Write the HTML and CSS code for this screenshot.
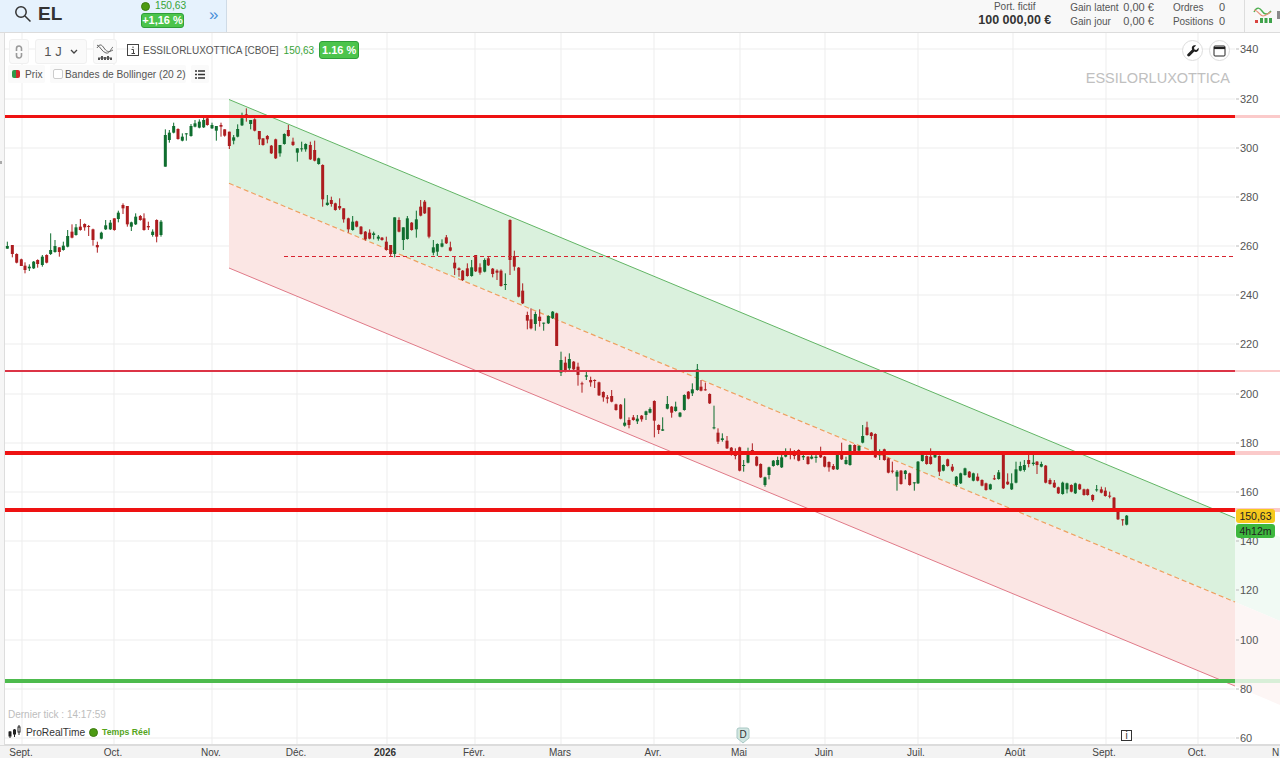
FILE: index.html
```html
<!DOCTYPE html>
<html lang="fr">
<head>
  <meta charset="UTF-8" />
  <title>EL - ProRealTime</title>
  <link rel="stylesheet" href="styles.css">
</head>
<body>

  <header class="topbar">
    <div class="search-panel">
      <svg class="search-icon" width="18" height="18" viewBox="0 0 18 18"><circle cx="7" cy="7" r="5.2"/><path d="M11 11l5.5 5.5"/></svg>
      <span class="ticker">EL</span>
      <div class="quote">
        <div class="quote-price"><span class="dot"></span>150,63</div>
        <div class="pill quote-change">+1,16 %</div>
      </div>
      <span class="more">»</span>
    </div>

    <div class="account">
      <div class="portfolio">
        <div>Port. fictif</div>
        <strong>100 000,00 €</strong>
      </div>
      <div class="stats gains">
        <span>Gain latent</span><span>0,00 €</span>
        <span>Gain jour</span><span>0,00 €</span>
      </div>
      <div class="stats orders">
        <span>Ordres</span><span>0</span>
        <span>Positions</span><span>0</span>
      </div>
      <div class="account-icon">
        <svg width="20" height="20" viewBox="0 0 20 20" fill="none"><path d="M1 7c3-6 6-4 8-1s5 5 9 0" stroke="#4caf50" stroke-width="1.4"/><path d="M1 5c4 0 6 6 9 6s5-3 8-4" stroke="#e8907a" stroke-width="1.2"/><path d="M2 15h3v3H2zM7 13h3v5H7zM11.500 13h3v5h-3zM16 13h3v5h-3z" fill="#3fa24a"/><path d="M2 15h3v3H2z" fill="#d9433f"/></svg>
      </div>
      <div class="account-edge"></div>
    </div>
  </header>

  <main class="chart">
    <svg class="plot" width="1280" height="725" viewBox="0 33 1280 725">
      <g class="grid">
        <path d="M5 49H1235M5 99H1235M5 148H1235M5 197H1235M5 246H1235M5 295H1235M5 344H1235M5 394H1235M5 443H1235M5 492H1235M5 541H1235M5 590H1235M5 640H1235M5 689H1235M5 738H1235"/>
        <path d="M22 33V745M114 33V745M212 33V745M297 33V745M387 33V745M475 33V745M561 33V745M654 33V745M740 33V745M825 33V745M918 33V745M1013 33V745M1106 33V745M1198 33V745"/>
      </g>

      <!-- channel -->
      <polygon class="band-up" points="229,99.500 1235,518 1235,602 229,183.300"/>
      <polygon class="band-down" points="229,183.300 1235,602 1235,686 229,268"/>
      <polygon class="band-up-pale" points="1235,518 1280,537 1280,621 1235,602"/>
      <polygon class="band-down-pale" points="1235,602 1280,621 1280,705 1235,686"/>
      <line class="chan-top" x1="229" y1="99.500" x2="1235" y2="518"/>
      <line class="chan-mid" x1="229" y1="183.300" x2="1235" y2="602"/>
      <line class="chan-low" x1="229" y1="268" x2="1235" y2="686"/>

      <g id="candles"></g>

      <!-- support and resistance -->
      <g class="levels">
        <rect class="lv-red" x="4" y="115" width="1231" height="3"/>
        <rect class="lv-crimson" x="4" y="370" width="1231" height="2"/>
        <rect class="lv-red" x="4" y="451" width="1231" height="4"/>
        <rect class="lv-red" x="4" y="508" width="1231" height="4"/>
        <rect class="lv-green" x="4" y="679" width="1231" height="4"/>
        <rect class="lv-red-pale" x="1235" y="115" width="45" height="3"/>
        <rect class="lv-red-pale" x="1235" y="370" width="45" height="2"/>
        <rect class="lv-red-pale" x="1235" y="451" width="45" height="4"/>
        <rect class="lv-red-pale" x="1235" y="508" width="45" height="4"/>
        <rect class="lv-green-pale" x="1235" y="679" width="45" height="4"/>
        <line class="lv-dash" x1="284" y1="256.500" x2="1235" y2="256.500"/>
      </g>

      <path class="price-ticks" d="M1236 49h3M1236 99h3M1236 148h3M1236 197h3M1236 246h3M1236 295h3M1236 344h3M1236 394h3M1236 443h3M1236 492h3M1236 541h3M1236 590h3M1236 640h3M1236 689h3M1236 738h3"/>
      <g class="price-labels">
        <text x="1240" y="53">340</text>
        <text x="1240" y="103">320</text>
        <text x="1240" y="152">300</text>
        <text x="1240" y="201">280</text>
        <text x="1240" y="250">260</text>
        <text x="1240" y="299">240</text>
        <text x="1240" y="348">220</text>
        <text x="1240" y="398">200</text>
        <text x="1240" y="447">180</text>
        <text x="1240" y="496">160</text>
        <text x="1240" y="545">140</text>
        <text x="1240" y="594">120</text>
        <text x="1240" y="644">100</text>
        <text x="1240" y="693">80</text>
        <text x="1240" y="742">60</text>
      </g>

      <rect class="time-axis" x="0" y="745" width="1280" height="13"/>
      <line class="time-rule" x1="0" y1="745" x2="1280" y2="745"/>
      <g class="time-labels">
        <text x="21" y="756">Sept.</text>
        <text x="113" y="756">Oct.</text>
        <text x="211" y="756">Nov.</text>
        <text x="296" y="756">Déc.</text>
        <text class="year" x="385" y="756">2026</text>
        <text x="474" y="756">Févr.</text>
        <text x="560" y="756">Mars</text>
        <text x="653" y="756">Avr.</text>
        <text x="739" y="756">Mai</text>
        <text x="824" y="756">Juin</text>
        <text x="916" y="756">Juil.</text>
        <text x="1015" y="756">Août</text>
        <text x="1104" y="756">Sept.</text>
        <text x="1197" y="756">Oct.</text>
        <text x="1275.500" y="756">N</text>
      </g>

      <!-- events -->
      <path class="event-d" d="M739 728h8a2 2 0 0 1 2 2v8l-6 5-6-5v-8a2 2 0 0 1 2-2z"/>
      <text class="event-d-text" x="743" y="738">D</text>
      <rect class="event-i" x="1121.500" y="730.500" width="10" height="10"/>
      <text class="event-i-text" x="1126.500" y="739">i</text>
    </svg>

    <div class="left-strip"></div>

    <div class="toolbar">
      <div class="tool-row">
        <button class="tool tool-lock">
          <svg width="8" height="14" viewBox="0 0 8 14" fill="none" stroke="#9a9a9a" stroke-width="1.600"><path d="M1.500 6V3.500a2.500 2.500 0 0 1 5 0V6"/><path d="M1.500 8v2.500a2.500 2.500 0 0 0 5 0V8"/></svg>
        </button>
        <button class="tool tool-period">1 J
          <svg width="8" height="5" viewBox="0 0 8 5" fill="none" stroke="#444" stroke-width="1.300"><path d="M1 1l3 3 3-3"/></svg>
        </button>
        <button class="tool tool-indic">
          <svg width="18" height="18" viewBox="0 0 18 18" fill="none" stroke="#555" stroke-width=".9"><path d="M1 5c3-5 5-3 7 0s4 5 9 2"/><path d="M1 2c3 1 5 7 9 8s5-5 7-6"/><path d="M2 15h14" stroke-width="1"/><path d="M3 17v-2M6 17v-4M9 17v-3M12 17v-4M15 17v-2" stroke-width="2"/></svg>
        </button>
        <svg class="info-icon" width="12" height="12" viewBox="0 0 12 12" fill="none" stroke="#444"><rect x=".5" y=".5" width="11" height="11"/><path d="M4.500 5.500H6.500V9.500M4.500 9.500H8M6 2.500v1.500" stroke-width="1"/></svg>
        <span class="chart-name">ESSILORLUXOTTICA [CBOE]</span>
        <span class="chart-price">150,63</span>
        <span class="pill chart-change">1.16 %</span>
      </div>
      <div class="tool-row second">
        <div class="chip chip-price"><span class="swatch"></span>Prix</div>
        <div class="chip chip-boll"><span class="check"></span>Bandes de Bollinger (20 2)</div>
        <div class="chip chip-list">
          <svg width="10" height="9" viewBox="0 0 10 9" stroke="#333" stroke-width="1.300"><path d="M0 1h2M3 1h7M0 4.500h2M3 4.500h7M0 8h2M3 8h7"/></svg>
        </div>
      </div>
    </div>

    <div class="round-tools">
      <button class="round">
        <svg width="12" height="12" viewBox="0 0 12 12" fill="#222"><path d="M11.500 2.800L9.400 4.900 7.400 4.500 7 2.500 9.100.4C7.400-.2 5.500.4 5 2c-.3.900-.2 1.800.1 2.500L.6 9c-.6.600-.6 1.500 0 2.100s1.600.6 2.200 0l4.500-4.500c.8.400 1.700.4 2.500.1 1.600-.6 2.300-2.300 1.700-3.900z"/></svg>
      </button>
      <button class="round">
        <svg width="13" height="12" viewBox="0 0 13 12" fill="none" stroke="#222"><rect x="1" y="1" width="11" height="10" rx="1"/><path d="M1 3h11" stroke-width="2.200"/></svg>
      </button>
    </div>

    <div class="watermark">ESSILORLUXOTTICA</div>

    <div class="tags">
      <div class="tag tag-price">150,63</div>
      <div class="tag tag-time">4h12m</div>
    </div>

    <div class="chart-foot">
      <div class="last-tick">Dernier tick : 14:17:59</div>
      <div class="brand">
        <svg width="14" height="14" viewBox="0 0 14 14" stroke="#222" fill="#222"><path d="M2 6v7M6.500 4v8M11 0v10" stroke-width="1"/><rect x="1" y="7" width="2" height="4"/><rect x="5.500" y="5" width="2" height="4"/><rect x="10" y="2" width="2" height="5" fill="#fff"/></svg>
        <span>ProRealTime</span>
        <span class="dot"></span>
        <span class="realtime">Temps Réel</span>
      </div>
    </div>
  </main>

  <script src="chart.js"></script>

</body>
</html>
```

FILE: styles.css
```css
:root {
  --up: #4cc44c;
  --up-dark: #2f9e3a;
  --quote-green: #37a337;
  --dot: #4c9a12;
  --text: #555;
}

* {
  box-sizing: border-box;
}

body {
  margin: 0;
  height: 100vh;
  overflow: hidden;
  font-family: 'Liberation Sans', Arial, sans-serif;
  color: var(--text);
  background: #fff;
  display: flex;
  flex-direction: column;
}

button {
  font-family: inherit;
  padding: 0;
  cursor: pointer;
}

.topbar {
  height: 33px;
  flex: none;
  display: flex;
  justify-content: space-between;
  background: #f8f8f8;
  border-bottom: 1px solid #dcdcdc;
}

.search-panel {
  width: 227px;
  display: flex;
  align-items: center;
  padding: 0 0 4px 14px;
  background: #e6f2fd;
  border-right: 1px solid #cfdbe6;
}

.search-icon {
  fill: none;
  stroke: #333;
  stroke-width: 1.5;
}

.ticker {
  margin-left: 6px;
  width: 103px;
  font-size: 19px;
  font-weight: bold;
  color: #333;
}

.quote {
  width: 58px;
}

.quote-price {
  display: flex;
  align-items: center;
  font-size: 10.200px;
  line-height: 12px;
  color: var(--quote-green);
  margin-bottom: 1px;
}

.dot {
  width: 9px;
  height: 9px;
  border-radius: 50%;
  background: var(--dot);
  border: 1px solid #3c7c0e;
  display: inline-block;
}

.quote-price .dot {
  margin-right: 5px;
}

.pill {
  background: var(--up);
  border: 1px solid var(--up-dark);
  border-radius: 3px;
  color: #fff;
  font-weight: bold;
  text-align: center;
}

.quote-change {
  width: 43px;
  height: 15px;
  font-size: 11px;
  line-height: 13px;
}

.more {
  margin-left: 10px;
  font-size: 17px;
  line-height: 17px;
  color: #4a90d9;
}

.account {
  display: flex;
  align-items: flex-start;
  font-size: 10px;
  color: #555;
}

.portfolio {
  width: 73px;
  text-align: center;
  line-height: 13px;
}

.portfolio strong {
  display: block;
  white-space: nowrap;
  font-size: 12.500px;
  line-height: 15px;
  color: #333;
}

.stats {
  display: grid;
  row-gap: 1px;
  line-height: 13px;
  padding-top: 1px;
  white-space: nowrap;
}

.gains {
  margin-left: 19px;
  grid-template-columns: 53px auto;
}

.orders {
  margin-left: 19px;
  grid-template-columns: 46px auto;
}

.gains span:nth-child(even),
.orders span:nth-child(even) {
  font-size: 11px;
}

.account-icon {
  margin-left: 19px;
  width: 33px;
  height: 32px;
  padding: 5px 0 0 8px;
  border-left: 1px solid #ddd;
}

.account-edge {
  width: 3px;
  height: 8px;
  margin-top: 11px;
  background: #8a8a8a;
}

.chart {
  position: relative;
  flex: 1;
}

.plot {
  display: block;
}

.grid path {
  fill: none;
  stroke: #ededed;
  stroke-width: 1;
}

.band-up { fill: #daf1dd; }
.band-down { fill: #fbe6e4; }
.band-up-pale { fill: #f1faf4; }
.band-down-pale { fill: #fdf6f5; }

.chan-top {
  stroke: #62b565;
  stroke-width: 1;
}

.chan-mid {
  stroke: #eea060;
  stroke-width: 1.200;
  stroke-dasharray: 5 3;
}

.chan-low {
  stroke: #e07a88;
  stroke-width: 1;
}

.candle-up { fill: #0f6e2f; }
.candle-down { fill: #ad1c1f; }

.lv-red { fill: #ee1212; }
.lv-crimson { fill: #dc3446; }
.lv-green { fill: #4dbb4d; }
.lv-red-pale { fill: #fbcaca; }
.lv-green-pale { fill: #d8efd8; }

.lv-dash {
  stroke: #d8232f;
  stroke-width: 1;
  stroke-dasharray: 4 3;
}

.price-ticks {
  stroke: #bbb;
  fill: none;
}

.price-labels text {
  font-size: 11px;
  fill: #555;
}

.time-axis { fill: #f3f3f3; }

.time-rule {
  stroke: #dcdcdc;
  stroke-width: 2;
}

.time-labels text {
  font-size: 10px;
  fill: #444;
  text-anchor: middle;
}

.time-labels .year {
  font-weight: bold;
  fill: #333;
}

.event-d {
  fill: #d2e6e2;
  stroke: #a8c8c4;
}

.event-d-text,
.event-i-text {
  font-size: 10px;
  fill: #333;
  text-anchor: middle;
}

.event-i {
  fill: #fff;
  stroke: #333;
}

.left-strip {
  position: absolute;
  top: 0;
  bottom: 13px;
  left: 0;
  width: 5px;
  background: #f6f6f6;
  border-right: 1px solid #ddd;
}

.left-strip::before {
  content: "";
  position: absolute;
  top: 128px;
  left: 0;
  width: 2px;
  height: 3px;
  background: #aaa;
}

.toolbar {
  position: absolute;
  top: 6px;
  left: 9px;
}

.tool-row {
  display: flex;
  align-items: center;
}

.tool-row.second {
  margin: 1px 0 0 -1px;
}

.tool {
  height: 25px;
  border: 1px solid #f0f0f0;
  border-radius: 3px;
  background: #fafafa;
  display: flex;
  align-items: center;
  justify-content: center;
}

.tool-lock {
  width: 20px;
}

.tool-period {
  width: 52px;
  margin-left: 6px;
  gap: 8px;
  font-size: 13px;
  color: #555;
}

.tool-indic {
  width: 24px;
  margin-left: 6px;
}

.info-icon {
  margin: 0 0 3px 10px;
}

.chart-name {
  margin: 0 0 3px 4px;
  font-size: 10px;
  white-space: nowrap;
  color: #555;
}

.chart-price {
  margin: 0 0 3px 5px;
  font-size: 10px;
  color: var(--quote-green);
}

.chart-change {
  margin: 0 0 3px 5px;
  width: 40px;
  height: 18px;
  font-size: 11px;
  line-height: 16px;
}

.chip {
  height: 18px;
  display: flex;
  align-items: center;
  font-size: 10.200px;
  background: #fafafa;
  border-radius: 2px;
  white-space: nowrap;
}

.chip-price {
  width: 37px;
  padding-left: 4px;
}

.swatch {
  width: 8px;
  height: 8px;
  margin-right: 5px;
  border-radius: 2px;
  background: linear-gradient(90deg, #2e9a4a 50%, #d22a2a 50%);
}

.chip-boll {
  width: 136px;
  margin-left: 5px;
  padding-left: 3px;
}

.check {
  width: 10px;
  height: 10px;
  margin-right: 2px;
  background: #fff;
  border: 1px solid #ccc;
  border-radius: 2px;
}

.chip-list {
  width: 18px;
  margin-left: 5px;
  justify-content: center;
}

.round-tools {
  position: absolute;
  top: 7px;
  left: 1182px;
  display: flex;
  gap: 6px;
}

.round {
  width: 21px;
  height: 21px;
  border-radius: 50%;
  border: 1px solid #ddd;
  background: #fff;
  display: flex;
  align-items: center;
  justify-content: center;
}

.watermark {
  position: absolute;
  top: 36px;
  right: 50px;
  font-size: 14.500px;
  line-height: 18px;
  color: #c0c0c0;
}

.tags {
  position: absolute;
  top: 476px;
  left: 1236px;
  width: 39px;
}

.tag {
  height: 14px;
  margin-bottom: 1px;
  border-radius: 3px;
  font-size: 10.500px;
  line-height: 14px;
  text-align: center;
  color: #222;
}

.tag-price {
  background: #f6c91d;
}

.tag-time {
  background: #3eb83e;
}

.chart-foot {
  position: absolute;
  top: 676px;
  left: 8px;
}

.last-tick {
  font-size: 10px;
  line-height: 12px;
  color: #bdbdbd;
}

.brand {
  display: flex;
  align-items: center;
  margin-top: 4px;
  font-size: 10.200px;
  color: #333;
}

.brand span:first-of-type {
  margin-left: 4px;
}

.brand .dot {
  margin-left: 4px;
}

.realtime {
  margin-left: 4px;
  font-size: 8.700px;
  font-weight: bold;
  color: #55a51c;
}
```

FILE: chart.js
```js
// candles traced off the chart, one block per stretch
// each row: x, colour, body top, body bottom, wick top, wick bottom
// values are in thirds of a pixel from the block origin
const blocks = [
  { ox: 0, oy: 100, rows: [
    [22,'g',438,446,425,446],[37,'r',435,462,435,472],[50,'r',462,488,460,490],[64,'r',478,498,476,498],
    [75,'r',497,510,487,520],[88,'g',500,505,493,513],[101,'g',485,505,483,507],[113,'r',480,492,478,503],
    [127,'g',470,495,465,500],[140,'r',465,488,463,490],[152,'g',450,462,400,465],[165,'g',438,456,420,458],
    [178,'r',442,456,442,470],[190,'g',437,450,425,452],[203,'g',408,440,390,442],[216,'r',395,413,373,415],
    [228,'g',382,405,372,407],[241,'r',380,390,357,392],[254,'r',372,382,370,392],[266,'r',378,380,375,408],
    [279,'r',388,420,386,437],[292,'r',435,442,425,458],[304,'g',398,416,395,418],[317,'g',376,388,360,390],
    [331,'g',368,388,360,390],[343,'r',355,390,355,392],[355,'g',338,357,332,367],[369,'r',315,325,310,342],
    [382,'r',318,373,318,380],[394,'g',367,380,365,393],[407,'g',350,373,340,375],[421,'r',348,360,345,362],
    [432,'r',355,390,340,392],[445,'r',378,382,365,390],[458,'g',395,405,388,410],[470,'r',360,410,358,427],
    [483,'g',365,405,360,410],[496,'g',105,200,88,200],[508,'g',98,120,90,128],[521,'g',78,98,68,100],
    [534,'r',87,117,85,119],[547,'g',110,122,100,124],[559,'g',100,102,100,122],[573,'g',78,108,72,110],
    [585,'g',70,80,60,82],[598,'g',65,83,58,85],[611,'g',60,82,53,84],[622,'r',55,75,50,77],
    [636,'g',75,85,68,87],[649,'g',78,92,78,122],[663,'r',75,80,68,110],[674,'r',88,107,88,110],
    [688,'r',95,138,95,147],[701,'g',112,122,105,133],[713,'g',87,110,73,112],[726,'g',55,76,38,78],
    [739,'r',43,52,25,65],[752,'g',60,72,60,88],[764,'r',58,92,55,94],[778,'r',93,118,93,135],
    [789,'r',115,135,115,137],[802,'r',108,118,105,130],[814,'r',137,160,135,162],[827,'r',118,175,116,177],
    [840,'g',135,160,135,170],[853,'g',102,132,100,134],[865,'r',90,108,75,110],[879,'r',125,135,113,138],
    [892,'g',145,158,145,185],[905,'g',145,147,125,155],[917,'g',132,148,130,155],[931,'r',135,178,125,180],
    [944,'r',150,182,122,184],[956,'g',175,192,173,194],[968,'r',195,298,193,320]
  ]},
  { ox: 320, oy: 180, rows: [
    [22,'g',68,75,45,77],[34,'r',60,72,50,80],[46,'r',70,90,68,92],[59,'r',78,85,55,90],
    [71,'r',85,118,85,128],[85,'r',115,148,113,158],[98,'g',125,150,108,152],[110,'r',124,140,122,142],
    [123,'r',140,162,138,164],[136,'r',155,178,153,182],[149,'r',158,176,148,178],[161,'g',160,165,155,178],
    [175,'g',170,176,165,182],[186,'r',173,180,171,182],[199,'r',185,210,170,212],[212,'r',195,222,195,230],
    [224,'g',112,222,112,232],[237,'r',120,155,112,157],[250,'g',142,180,142,210],[262,'g',115,177,108,179],
    [275,'r',128,150,126,152],[289,'g',118,148,92,173],[302,'r',80,107,60,109],[314,'r',65,100,60,102],
    [327,'r',82,170,82,175],[340,'g',202,218,180,226],[352,'g',192,215,190,228],[366,'g',190,200,178,202],
    [379,'r',172,190,165,192],[391,'r',202,212,185,214],[404,'r',248,265,228,285],[417,'r',265,270,262,290],
    [428,'r',272,300,270,303],[442,'r',265,288,250,290],[455,'g',262,288,240,290],[467,'r',225,274,225,276],
    [480,'r',262,278,250,284],[494,'g',240,275,235,277],[505,'r',235,256,228,258],[518,'r',266,282,264,292],
    [531,'r',272,278,268,300],[543,'r',272,318,268,320],[556,'g',312,313,280,330],[570,'r',120,240,118,285],
    [583,'r',228,260,212,272],[596,'r',263,350,261,352],[608,'r',332,370,310,372],[622,'r',405,422,395,448],
    [633,'r',418,445,385,448],[646,'g',402,432,395,452],[659,'r',410,423,388,440],[671,'g',428,430,428,452],
    [685,'g',408,430,406,432],[698,'g',395,415,393,417],[710,'r',400,498,398,498],[723,'g',540,578,515,588],
    [736,'r',548,575,530,577],[748,'g',537,565,520,570],[761,'r',545,568,543,570],[774,'r',560,585,548,617],
    [786,'r',610,612,605,638],[799,'g',586,590,572,600],[812,'r',600,607,590,620],[824,'r',600,602,598,624],
    [837,'r',607,646,605,648],[850,'r',636,652,634,665],[862,'r',652,656,645,670],[875,'r',648,665,630,667],
    [888,'r',673,690,671,692],[902,'r',674,716,672,718],[914,'g',728,737,655,740],[927,'r',720,735,712,745],
    [940,'r',712,720,705,722],[952,'g',716,724,705,732]
  ]},
  { ox: 640, oy: 350, rows: [
    [5,'r',197,208,195,215],[18,'g',184,195,182,210],[30,'g',177,188,172,190],[43,'r',153,212,151,262],
    [56,'r',225,240,223,252],[68,'g',238,242,202,243],[82,'g',162,176,138,178],[95,'r',170,188,168,203],
    [107,'g',170,183,155,185],[120,'g',188,200,186,202],[133,'g',135,180,133,182],[145,'r',125,146,123,148],
    [157,'g',118,130,100,138],[172,'g',58,120,42,122],[183,'r',110,122,90,124],[196,'r',118,120,98,122],
    [209,'r',132,160,130,162],[222,'g',232,233,167,238],[234,'r',248,275,235,282],[247,'g',265,270,250,275],
    [261,'r',272,295,258,297],[274,'r',293,315,291,317],[286,'r',315,318,295,328],[299,'r',292,362,290,364],
    [311,'g',345,347,330,365],[324,'g',305,338,293,340],[337,'r',300,310,280,312],[350,'r',320,347,318,349],
    [362,'r',342,382,340,384],[375,'g',382,405,380,410],[387,'g',352,375,350,388],[400,'g',332,348,330,350],
    [413,'g',330,345,320,347],[425,'g',322,352,312,354],[437,'g',305,320,295,322],[451,'r',312,315,295,328],
    [463,'r',310,318,300,328],[476,'r',300,332,298,334],[490,'g',318,322,312,330],[504,'r',320,342,318,344],
    [515,'g',320,326,312,328],[528,'g',320,324,312,338],[542,'r',315,322,290,324],[554,'r',320,350,318,352],
    [567,'r',336,352,334,365],[580,'r',348,358,342,360],[592,'g',312,358,310,360],[605,'r',308,328,278,330],
    [618,'g',330,342,320,344],[630,'g',285,345,283,347],[644,'r',285,305,283,307],[657,'g',288,302,286,304],
    [668,'g',258,278,225,280],[681,'r',232,255,215,257],[694,'r',248,258,246,268],[706,'r',252,322,250,324],
    [719,'g',310,316,298,330],[733,'r',298,330,296,332],[745,'r',325,368,323,370],[757,'r',362,365,335,370],
    [771,'g',365,380,360,422],[783,'r',362,402,360,404],[796,'g',362,372,360,388],[809,'r',370,405,368,407],
    [823,'g',397,398,397,422],[834,'g',335,400,333,402],[847,'g',315,333,313,335],[860,'r',318,342,316,344],
    [872,'r',320,342,295,344],[885,'g',315,322,313,324],[898,'r',318,365,316,378],[910,'g',345,362,343,364],
    [923,'r',328,348,326,350],[937,'r',350,362,342,366],[949,'g',380,405,378,410],[962,'g',370,400,368,402],
    [975,'g',355,375,353,377]
  ]},
  { ox: 900, oy: 430, rows: [
    [208,'r',125,142,123,144],[220,'g',130,152,128,154],[233,'r',140,152,130,154],[246,'r',150,167,148,169],
    [258,'r',160,180,158,182],[271,'g',163,178,161,180],[283,'r',145,148,135,150],[296,'g',127,147,120,149],
    [310,'r',75,175,73,177],[323,'r',155,163,130,165],[335,'g',160,178,130,180],[348,'g',118,158,95,160],
    [361,'g',108,122,95,124],[373,'g',105,120,90,125],[386,'r',90,102,70,112],[400,'g',98,102,70,107],
    [411,'r',95,105,93,132],[424,'g',102,110,95,112],[437,'r',107,158,105,160],[450,'r',150,162,145,164],
    [463,'r',158,172,150,174],[475,'r',172,190,170,192],[488,'g',158,192,155,194],[501,'g',160,178,158,190],
    [514,'r',165,185,163,187],[526,'g',160,190,158,192],[539,'r',163,178,161,180],[552,'r',178,195,176,197],
    [563,'r',178,195,176,197],[578,'r',195,210,193,215],[590,'g',178,180,165,185],[604,'r',178,188,170,190],
    [616,'r',182,198,172,200],[629,'r',197,199,185,205],[642,'r',203,235,201,237],[654,'r',238,268,236,270],
    [668,'r',268,270,268,287],[680,'g',257,284,255,286]
  ]}
];

const group = document.getElementById('candles');
const NS = 'http://www.w3.org/2000/svg';

function addRect(x, y, w, h, cls) {
  const r = document.createElementNS(NS, 'rect');
  r.setAttribute('x', x);
  r.setAttribute('y', y);
  r.setAttribute('width', w);
  r.setAttribute('height', h);
  r.setAttribute('class', cls);
  group.appendChild(r);
}

blocks.forEach(function (block) {
  block.rows.forEach(function (row) {
    const cx = block.ox + row[0] / 3;
    const cls = row[1] === 'g' ? 'candle-up' : 'candle-down';
    const top = block.oy + row[2] / 3;
    const bottom = block.oy + row[3] / 3;
    const wickTop = block.oy + row[4] / 3;
    const wickBottom = block.oy + row[5] / 3;
    addRect(cx - 0.5, wickTop, 1, wickBottom - wickTop, cls);
    addRect(cx - 1.5, top, 3, Math.max(bottom - top, 1), cls);
  });
});
```
